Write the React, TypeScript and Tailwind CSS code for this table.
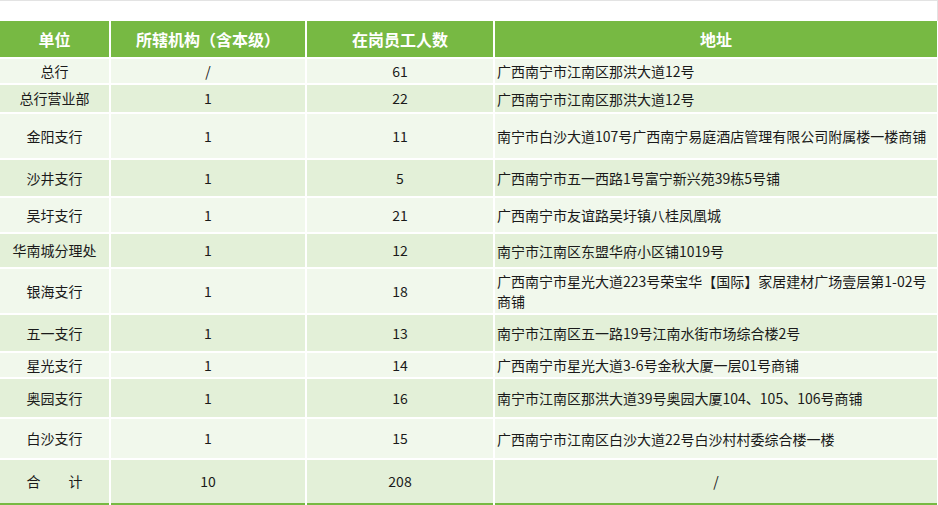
const rows = [
  { name: "总行", orgs: "/", staff: "61", addr: "广西南宁市江南区那洪大道12号", h: "h-[24px]" },
  { name: "总行营业部", orgs: "1", staff: "22", addr: "广西南宁市江南区那洪大道12号", h: "h-[27px]" },
  { name: "金阳支行", orgs: "1", staff: "11", addr: "南宁市白沙大道107号广西南宁易庭酒店管理有限公司附属楼一楼商铺", h: "h-[44px]" },
  { name: "沙井支行", orgs: "1", staff: "5", addr: "广西南宁市五一西路1号富宁新兴苑39栋5号铺", h: "h-[36px]" },
  { name: "吴圩支行", orgs: "1", staff: "21", addr: "广西南宁市友谊路吴圩镇八桂凤凰城", h: "h-[34px]" },
  { name: "华南城分理处", orgs: "1", staff: "12", addr: "南宁市江南区东盟华府小区铺1019号", h: "h-[33px]" },
  { name: "银海支行", orgs: "1", staff: "18", addr: "广西南宁市星光大道223号荣宝华【国际】家居建材广场壹层第1-02号\n商铺", h: "h-[44px]" },
  { name: "五一支行", orgs: "1", staff: "13", addr: "南宁市江南区五一路19号江南水街市场综合楼2号", h: "h-[36px]" },
  { name: "星光支行", orgs: "1", staff: "14", addr: "广西南宁市星光大道3-6号金秋大厦一层01号商铺", h: "h-[24px]" },
  { name: "奥园支行", orgs: "1", staff: "16", addr: "南宁市江南区那洪大道39号奥园大厦104、105、106号商铺", h: "h-[38px]" },
  { name: "白沙支行", orgs: "1", staff: "15", addr: "广西南宁市江南区白沙大道22号白沙村村委综合楼一楼", h: "h-[39px]" },
];

const grid = "grid grid-cols-[109px_194px_186px_442px] gap-x-[2px]";

export default function App() {
  return (
    <div
      className="w-[938px] h-[505px] overflow-hidden bg-white text-[14px] text-[#1a1a1a]"
      style={{ fontFamily: '"Noto Sans CJK SC", "Noto Sans", sans-serif' }}
    >
      <div className="h-[21px] border-t border-r border-[#e3e3e3]" />
      <div className="flex flex-col gap-y-[2px]">
        {/* Header */}
        <div className={`${grid} h-[36px] text-white text-[16px] font-bold`}>
          {["单位", "所辖机构（含本级）", "在岗员工人数", "地址"].map((t) => (
            <div key={t} className="bg-[#77b943] flex items-center justify-center">
              {t}
            </div>
          ))}
        </div>

        {rows.map((r, i) => {
          const bg = i % 2 === 0 ? "bg-[#f1f8ec]" : "bg-[#e3f0d8]";
          return (
            <div key={r.name} className={`${grid} ${r.h}`}>
              <div className={`${bg} flex items-center justify-center`}>{r.name}</div>
              <div className={`${bg} flex items-center justify-center`}>{r.orgs}</div>
              <div className={`${bg} flex items-center justify-center`}>{r.staff}</div>
              <div className={`${bg} flex items-center pl-[2px] leading-[20px] whitespace-pre-line`}>
                {r.addr}
              </div>
            </div>
          );
        })}

        {/* Total */}
        <div className={`${grid} h-[45px]`}>
          <div className="bg-[#e3f0d8] border-b-2 border-[#77b943] flex items-center justify-center whitespace-pre">
            {"合\u3000\u3000计"}
          </div>
          <div className="bg-[#e3f0d8] border-b-2 border-[#77b943] flex items-center justify-center">10</div>
          <div className="bg-[#e3f0d8] border-b-2 border-[#77b943] flex items-center justify-center">208</div>
          <div className="bg-[#e3f0d8] border-b-2 border-[#77b943] flex items-center justify-center">/</div>
        </div>
      </div>
    </div>
  );
}
